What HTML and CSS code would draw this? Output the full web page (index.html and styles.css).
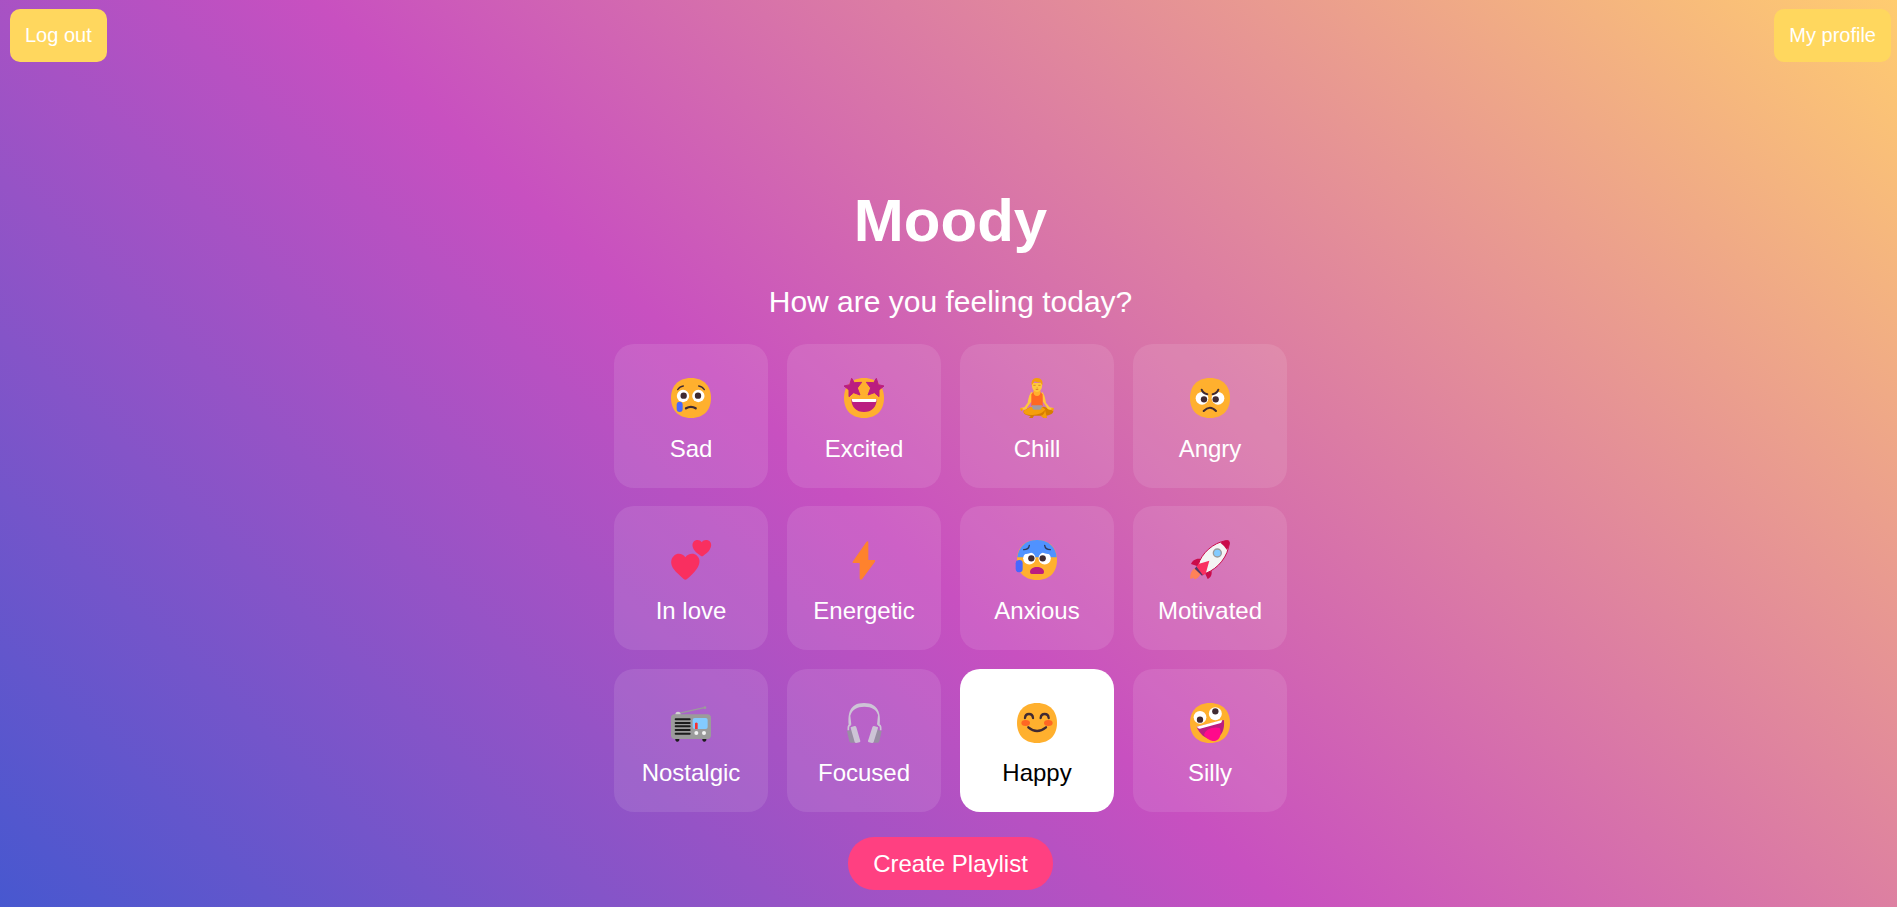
FILE: index.html
```html
<!DOCTYPE html>
<html lang="en">
<head>
<meta charset="utf-8">
<title>Moody</title>
<link rel="stylesheet" href="styles.css">
</head>
<body>
<header class="topbar">
  <button class="nav-button">Log out</button>
  <button class="nav-button">My profile</button>
</header>
<main class="content">
  <h1 class="title">Moody</h1>
  <p class="question">How are you feeling today?</p>
  <div class="moods">
    <button class="mood">
      <svg class="emoji" viewBox="0 0 120 120"><path fill="#ffb02e" d="M60 120C101 120 120 93 120 60S101 0 60 0 0 27 0 60s19 60 60 60Z"/><circle cx="36" cy="54" r="18.500" fill="#fff"/><circle cx="82" cy="54" r="18.500" fill="#fff"/><circle cx="38" cy="53" r="9.500" fill="#402a32"/><circle cx="81" cy="53" r="9.500" fill="#402a32"/><path d="M20 35q6-10 17-11M100 35q-6-10-17-11" fill="none" stroke="#402a32" stroke-width="4" stroke-linecap="round"/><path d="M45 91q15-9 29 0" fill="none" stroke="#402a32" stroke-width="7" stroke-linecap="round"/><rect x="17" y="71" width="18" height="31" rx="9" fill="#4768ff"/></svg>
      <span>Sad</span>
    </button>
    <button class="mood">
      <svg class="emoji" viewBox="0 0 120 120"><path fill="#ffb02e" d="M60 120C101 120 120 93 120 60S101 0 60 0 0 27 0 60s19 60 60 60Z"/><path fill="#bb1d80" stroke="#bb1d80" stroke-width="3" stroke-linejoin="round" d="M23 1 31 14 53 13 40 30 48 51 29 44 15 56V36L0 24 17 20ZM97 1 89 14 67 13 80 30 72 51 91 44 105 56V36L120 24 103 20Z"/><path fill="#bb1d80" d="M22 63h76c0 25-15 39-38 39S22 88 22 63Z"/><path fill="#fff" d="M23 63h74v5q0 4-4 4H28q-4 0-4-4Z"/></svg>
      <span>Excited</span>
    </button>
    <button class="mood">
      <svg class="emoji" viewBox="0 0 120 120"><path fill="#d67d00" d="M40 87 20 98c-3 8 7 14 21 16l-5 6h11l4-7h24l4 7h11l-3-7c14-2 23-8 22-15L82 86Z"/><path fill="#f59f0a" d="m40 87-20 11c-3 8 8 13 27 13 16 0 31-6 38-17L75 87ZM84 95c-1 13-8 17-13 19l9 6h10l-3-12Z"/><path fill="#ffc83d" d="M44 41c-6 5-10 18-12 33L22 88l-12 2 2 5h10c4 0 8-3 9-7l13-18 3-25ZM75 41c6 5 10 18 12 33l11 14 12 2-2 5H98c-4 0-8-3-9-7L77 70l-3-25Z"/><path fill="#f59f0a" d="M9 91h8v4l-3 5-3-3ZM103 91h8l-2 6-3 3-3-5Z"/><path fill="#ff6723" d="M43 49l7-8h19l8 8v35H43Z"/><path fill="#ffb02e" d="M49 38h22q0 16-11 16T49 38Z"/><path fill="#ffc83d" d="M45 15h30v12q-3 13-15 15-12-2-15-15Z"/><path fill="#f59f0a" d="M44 22C42 8 48 0 61 0c11 0 18 9 15 22l-6-9q-10 1-17-3Z"/><path d="M49 22h7m8 0h7M56 34q4 2 8 0M59 30h3" stroke="#d97a27" stroke-width="2.500" fill="none"/><path fill="#a09ba4" d="M44 82h31l-1 7q-1 6-6 6H52q-5 0-6-6Z"/></svg>
      <span>Chill</span>
    </button>
    <button class="mood">
      <svg class="emoji" viewBox="0 0 120 120"><path fill="#ffb02e" d="M60 120C101 120 120 93 120 60S101 0 60 0 0 27 0 60s19 60 60 60Z"/><circle cx="36" cy="61" r="19" fill="#fff"/><circle cx="84" cy="61" r="19" fill="#fff"/><path fill="#ffb02e" d="m30 38 25 14 3-20H30ZM90 38 65 52l-3-20h28Z"/><circle cx="42" cy="64" r="9.500" fill="#402a32"/><circle cx="77" cy="64" r="9.500" fill="#402a32"/><path d="M35 35q4 11 17 14M85 35q-4 11-17 14M41 99q19-20 37 0" fill="none" stroke="#402a32" stroke-width="6" stroke-linecap="round"/></svg>
      <span>Angry</span>
    </button>
    <button class="mood">
      <svg class="emoji" viewBox="0 0 120 120"><path fill="#f92f60" d="M43 52C36 40 19 38 9 47c-12 11-10 28-1 40 8 11 19 20 30 30q5 5 10 0c11-9 21-19 29-30 9-12 13-29 1-40-10-9-27-7-35 5ZM92 7C87-2 76-2 69 4c-7 7-5 18 0 25 5 8 12 12 20 18q4 3 8 0c7-6 15-10 19-18 5-8 7-18 0-25-7-6-18-6-24 3Z"/></svg>
      <span>In love</span>
    </button>
    <button class="mood">
      <svg class="emoji" viewBox="0 0 120 120"><path fill="#ff822d" d="M67 6q6-5 6 2v52h18q5 0 2 5l-39 53q-7 4-7-3V69H29q-5 0-3-4Z"/></svg>
      <span>Energetic</span>
    </button>
    <button class="mood">
      <svg class="emoji" viewBox="0 0 120 120"><path fill="#ffb02e" d="M60 120C101 120 120 93 120 60S101 0 60 0 0 27 0 60s19 60 60 60Z"/><path fill="#5092ff" d="M1 52C4 22 25 0 60 0s57 22 59 52Z"/><circle cx="37" cy="55" r="18.500" fill="#fff"/><circle cx="83" cy="55" r="18.500" fill="#fff"/><path fill="#5092ff" d="M19 43q18 0 31-9l-5-4-26 4ZM101 43q-18 0-31-9l5-4 26 4Z"/><circle cx="43" cy="55" r="9.500" fill="#402a32"/><circle cx="77" cy="55" r="9.500" fill="#402a32"/><path d="M20 29q15 0 17-13M100 29q-15 0-17-13" fill="none" stroke="#2d3655" stroke-width="4" stroke-linecap="round"/><path fill="#bb1d80" d="M39 96c0-20 42-20 42 0q0 6-5 6H44q-5 0-5-6Z"/><rect x="-4" y="60" width="21" height="37" rx="10" fill="#4768ff"/></svg>
      <span>Anxious</span>
    </button>
    <button class="mood">
      <svg class="emoji" viewBox="0 0 120 120"><path fill="#ff8257" d="M17 84C6 88-1 102 1 117l11-4v5q12 0 19-15l-4-13Z"/><path fill="#ca0b4a" d="M34 57C19 53 7 61 3 72l20 7ZM64 89c4 16-3 24-11 28l-8-17Z"/><path fill="#f4f4f4" stroke="#ca0b4a" stroke-width="3" d="M25 74C34 41 69 8 108 2q9-1 10 7c-4 39-32 76-71 91Z"/><path fill="#ca0b4a" d="M91 8c7-4 15-7 22-7q6 0 6 7c-1 8-4 15-8 22Q101 15 91 8Z"/><path fill="#533566" d="m20 79 22 23-6 5-22-21Z"/><path fill="#f92f60" d="m20 81 5-9 33-10-11 39-8 5Z"/><circle cx="82" cy="39" r="12" fill="#83cbff" stroke="#9b9b9b" stroke-width="4"/></svg>
      <span>Motivated</span>
    </button>
    <button class="mood">
      <svg class="emoji" viewBox="0 0 120 120"><path stroke="#9b9b9b" stroke-width="4" d="m23 31 80-18"/><circle cx="102" cy="14" r="4" fill="#9b9b9b"/><path fill="#d3d3d3" d="M13 35q0-9 8-9t8 9Z"/><path fill="#1c1c1c" d="M13 105h12v7q-6 9-12 0ZM94 105h12v7q-6 9-12 0Z"/><rect y="34" width="120" height="74" rx="11" fill="#9b9b9b"/><path stroke="#1c1c1c" stroke-width="6" stroke-linecap="round" d="M14 49h42M14 60h42M14 70h42M14 81h42M14 92h42"/><rect x="65" y="45" width="45" height="33" rx="6" fill="#83cbff"/><path fill="#f8312f" d="M72 61q4-5 8 0v17h-8Z"/><circle cx="76" cy="90" r="6" fill="#f4f4f4"/><circle cx="99" cy="90" r="6" fill="#f4f4f4"/></svg>
      <span>Nostalgic</span>
    </button>
    <button class="mood">
      <svg class="emoji" viewBox="0 0 120 120"><path fill="#998ea4" d="m9 84 15-4 10 39H20q-3 0-4-4ZM113 84l-15-4-10 39h14q3 0 4-4Z"/><path fill="none" stroke="#cdc4d6" stroke-width="5" stroke-linejoin="round" d="M20 65q-7 2-7 9v8M102 65q8 2 8 9v8"/><path fill="#cdc4d6" d="M14 65c-2-31 1-65 46-65s50 34 47 65h-8l3-29C98 20 83 11 61 11S24 20 19 38l3 27Z"/><path fill="#cdc4d6" d="M20 75q-1-3 2-3l10-3q4 0 5 4l12 41q0 4-3 4l-9 2q-4 0-5-3ZM102 75q1-3-2-3l-10-3q-4 0-5 4l-13 41q0 4 3 4l9 2q4 0 5-3Z"/></svg>
      <span>Focused</span>
    </button>
    <button class="mood mood-selected">
      <svg class="emoji" viewBox="0 0 120 120"><path fill="#ffb02e" d="M60 120C101 120 120 93 120 60S101 0 60 0 0 27 0 60s19 60 60 60Z"/><ellipse cx="26" cy="60" rx="13" ry="9" fill="#ff6723"/><ellipse cx="94" cy="60" rx="13" ry="9" fill="#ff6723"/><path d="M24 45q1-12 12-12t12 12M71 45q1-12 12-12t12 12M34 73q26 22 53 0" fill="none" stroke="#402a32" stroke-width="7" stroke-linecap="round"/></svg>
      <span>Happy</span>
    </button>
    <button class="mood">
      <svg class="emoji" viewBox="0 0 120 120"><path fill="#ffb02e" d="M60 120C101 120 120 93 120 60S101 0 60 0 0 27 0 60s19 60 60 60Z"/><circle cx="30" cy="43" r="19" fill="#fff"/><circle cx="76" cy="32" r="19.500" fill="#fff"/><circle cx="30" cy="50" r="9.500" fill="#402a32"/><circle cx="76" cy="25" r="9.500" fill="#402a32"/><path fill="#bb1d80" d="m20 71 82-20c2 28-5 47-27 56-25 5-45-11-55-36Z"/><path fill="#fff" d="m20 71 76-20-1 6q-1 3-5 4L30 77q-4 1-6-2Z"/><path fill="#ff0a8b" d="M42 96c2-17 28-27 47-21 7 14 2 36-14 39-15 1-24-7-33-18Z"/></svg>
      <span>Silly</span>
    </button>
  </div>
  <button class="create-button">Create Playlist</button>
</main>
</body>
</html>
```
FILE: styles.css
```css
* {
  box-sizing: border-box;
}

body {
  margin: 0;
  height: 907px;
  overflow: hidden;
  font-family: "Liberation Sans", Arial, sans-serif;
  color: #fff;
  background: linear-gradient(43deg, #4158d0 0%, #c850c0 46%, #ffcc70 100%) 0 0 / 100% 963px no-repeat;
}

button {
  border: 0;
  font-family: inherit;
  color: inherit;
  cursor: pointer;
}

.topbar {
  display: flex;
  justify-content: space-between;
  padding: 9px 6px 0 10px;
}

.nav-button {
  height: 53px;
  padding: 0 15px;
  border-radius: 10px;
  font-size: 20px;
  background: #ffd75e;
}

.content {
  display: flex;
  flex-direction: column;
  align-items: center;
  padding: 125px 0 0 4px;
}

.title {
  margin: 0;
  font-size: 60px;
  line-height: 68px;
}

.question {
  margin: 30px 0 25px;
  font-size: 30px;
  line-height: 34px;
}

.moods {
  display: grid;
  grid-template-columns: repeat(4, 154px);
  grid-auto-rows: 143.6px;
  gap: 18.8px 19px;
}

.mood {
  display: flex;
  flex-direction: column;
  align-items: center;
  justify-content: flex-start;
  gap: 16.6px;
  padding: 34px 0 0;
  border-radius: 20px;
  font-size: 24px;
  line-height: 28px;
  background: rgba(255, 255, 255, 0.1);
}

.mood-selected {
  color: #000;
  background: #fff;
}

.emoji {
  width: 40px;
  height: 40px;
  overflow: visible;
}

.create-button {
  height: 53px;
  margin-top: 24.6px;
  padding: 2px 25px 0;
  border-radius: 26px;
  font-size: 24px;
  background: #ff4081;
}
```
